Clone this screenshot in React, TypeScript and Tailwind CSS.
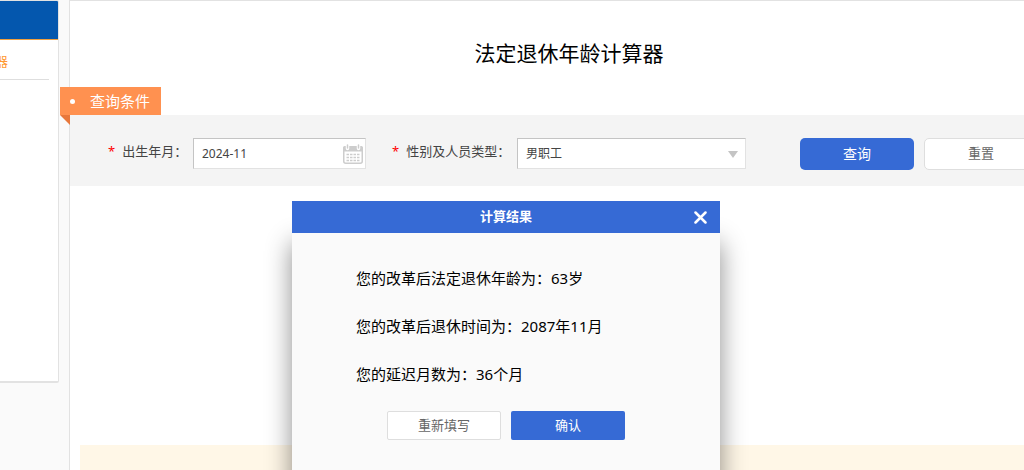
// App.tsx - Retirement age calculator page with the result dialog open

import { useState } from "react";

const results = [
  { label: "您的改革后法定退休年龄为：", value: "63岁" },
  { label: "您的改革后退休时间为：", value: "2087年11月" },
  { label: "您的延迟月数为：", value: "36个月" },
];

function CalendarIcon() {
  return (
    <svg width="20" height="20" viewBox="0 0 20 20" aria-hidden="true">
      <rect x="0.75" y="2.75" width="18.5" height="16.5" rx="2" fill="#fff" stroke="#cdcdcd" strokeWidth="1.5" />
      <path d="M0 7.5V4a2 2 0 0 1 2-2h16a2 2 0 0 1 2 2v3.500z" fill="#cdcdcd" />
      <path d="M4.500 1v3.500M15.500 1v3.500" stroke="#fff" strokeWidth="3.500" strokeLinecap="round" />
      <path d="M4.500 1v3M15.500 1v3" stroke="#cdcdcd" strokeWidth="1.500" strokeLinecap="round" />
      <path
        d="M3.500 10.500h13M3.500 13.500h13M3.500 16.500h13"
        stroke="#cdcdcd"
        strokeWidth="1.500"
        strokeDasharray="2.500 1"
      />
    </svg>
  );
}

function Sidebar() {
  return (
    <aside className="h-[383px] w-[59px] shrink-0 overflow-hidden rounded-r-xs border-t border-r border-b-2 border-[#e2e2e2] bg-white">
      <div className="h-[39px] border-b border-[#f0a040] bg-[#0457ae]" />
      <div className="mr-[9px] h-10 border-b border-[#dedede]">
        <a href="#calculator" className="flex h-full w-2 items-center justify-end pt-1 text-[13px] text-[#ff9933]">
          器
        </a>
      </div>
    </aside>
  );
}

function QueryForm() {
  const [month, setMonth] = useState("2024-11");

  return (
    <form
      className="flex h-[71px] items-center bg-[#f4f4f4] pt-[6px] pl-[38px] text-[13px] text-[#444]"
      onSubmit={(e) => e.preventDefault()}
    >
      <label htmlFor="month" className="flex w-[85px] shrink-0 gap-[7px] pb-1 whitespace-nowrap">
        <span className="text-[#f00]">*</span>出生年月：
      </label>
      <div className="relative shrink-0">
        <input
          id="month"
          value={month}
          onChange={(e) => setMonth(e.target.value)}
          className="block h-[31px] w-[173px] border border-t-[#c4c4c4] border-r-[#e2e2e2] border-b-[#e2e2e2] border-l-[#c4c4c4] bg-white px-2 text-xs"
        />
        <span className="absolute top-[6px] right-[3px]">
          <CalendarIcon />
        </span>
      </div>

      <label htmlFor="kind" className="ml-[26px] flex w-[125px] shrink-0 gap-[7px] pb-1 whitespace-nowrap">
        <span className="text-[#f00]">*</span>性别及人员类型：
      </label>
      <div className="relative shrink-0">
        <select
          id="kind"
          className="block h-[31px] w-[229px] appearance-none border border-t-[#c4c4c4] border-r-[#e2e2e2] border-b-[#e2e2e2] border-l-[#c4c4c4] bg-white px-2 text-xs"
        >
          <option>男职工</option>
        </select>
        <svg className="pointer-events-none absolute top-[13px] right-2" width="10" height="7" viewBox="0 0 10 7" aria-hidden="true">
          <path d="M0 0h10L5 7z" fill="#c4c4c4" />
        </svg>
      </div>

      <button type="submit" className="ml-[54px] h-8 w-[114px] shrink-0 rounded-[5px] bg-[#366ad5] text-sm text-white">
        查询
      </button>
      <button type="reset" className="ml-[10px] h-8 w-[114px] shrink-0 rounded-[5px] border border-[#dedede] bg-white text-[13px] text-[#666]">
        重置
      </button>
    </form>
  );
}

function ResultDialog({ onClose }: { onClose: () => void }) {
  return (
    <div role="dialog" aria-labelledby="result-title" className="absolute top-[201px] left-[292px] w-[428px]">
      <div className="relative z-10 flex h-8 items-center justify-center bg-[#366ad5] text-white">
        <h2 id="result-title" className="text-[13px] font-bold">
          计算结果
        </h2>
        <button type="button" aria-label="关闭" onClick={onClose} className="absolute right-[13px]">
          <svg width="13" height="13" viewBox="0 0 13 13" aria-hidden="true">
            <path d="M1.500 1.500l10 10M11.500 1.500l-10 10" stroke="#fff" strokeWidth="2.500" strokeLinecap="round" />
          </svg>
        </button>
      </div>

      <div className="bg-[#fafafa] pt-[21px] pb-16 shadow-[0_10px_24px_rgba(0,0,0,0.45)]">
        <div className="px-16 text-[15px] leading-[48px] text-black">
          {results.map((row) => (
            <p key={row.label}>
              {row.label}
              {row.value}
            </p>
          ))}
        </div>
        <div className="mt-[13px] flex justify-center gap-[10px] text-[13px]">
          <button type="button" className="h-[29px] w-[114px] rounded-xs border border-[#dedede] bg-white text-[#666]">
            重新填写
          </button>
          <button type="button" onClick={onClose} className="h-[29px] w-[114px] rounded-xs bg-[#366ad5] text-white">
            确认
          </button>
        </div>
      </div>
    </div>
  );
}

export default function App() {
  const [open, setOpen] = useState(true);

  return (
    <div
      lang="zh-CN"
      className="relative flex h-screen items-start gap-[10px] overflow-hidden bg-[#fafafa] font-['Noto_Sans','Noto_Sans_CJK_SC',sans-serif]"
    >
      <Sidebar />

      {/* The panel runs past the right edge of the window */}
      <main className="-mr-11 flex min-w-0 flex-1 flex-col self-stretch border-t border-l border-[#e2e2e2] bg-white">
        <h1 className="pt-9 text-center text-[21px] leading-8 text-black">法定退休年龄计算器</h1>

        {/* Ribbon with its folded corner */}
        <div className="relative mt-[18px] -ml-[10px] flex h-7 w-[101px] items-center gap-[15px] bg-[#ff9150] pl-[10px] text-[15px] whitespace-nowrap text-white">
          <span className="size-[5px] rounded-full bg-white" />
          查询条件
          <svg className="absolute top-full left-0" width="10" height="10" viewBox="0 0 10 10" aria-hidden="true">
            <path d="M0 0h10v10z" fill="#e8783c" />
          </svg>
        </div>

        <QueryForm />

        <div className="mt-auto ml-[10px] h-[25px] bg-[#fff7e7]" />
      </main>

      {open && <ResultDialog onClose={() => setOpen(false)} />}
    </div>
  );
}
